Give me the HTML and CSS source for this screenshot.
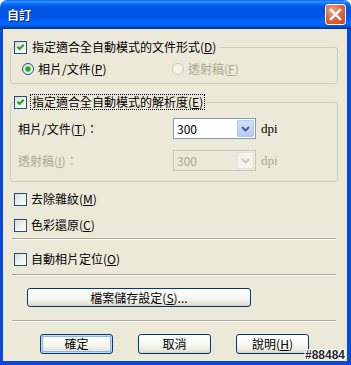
FILE: index.html
```html
<!DOCTYPE html>
<html lang="zh-Hant">
<head>
<meta charset="utf-8">
<title>自訂</title>
<link rel="stylesheet" href="styles.css">
</head>
<body>
<div class="window">
  <div class="titlebar">
    <span class="title">自訂</span>
    <span class="close"><svg width="21" height="21" viewBox="0 0 21 21"><path d="M6 6 L15 15 M15 6 L6 15" stroke="#fff" stroke-width="2.4" stroke-linecap="square"/></svg></span>
  </div>
  <div class="client">
    <fieldset class="group g1">
      <legend><span class="cb"><svg width="11" height="11" viewBox="0 0 11 11"><path d="M2.5 4.8 L4.6 7 L8.6 2.8" fill="none" stroke="#21A121" stroke-width="2.1"/></svg></span><span class="ltext">指定適合全自動模式的文件形式(<u>D</u>)</span></legend>
      <div class="radio-row">
        <span class="radio"><span class="rb on"></span>相片/文件(<u>P</u>)</span>
        <span class="radio dis"><span class="rb off"></span>透射稿(<u>F</u>)</span>
      </div>
    </fieldset>
    <fieldset class="group g2">
      <legend><span class="cb"><svg width="11" height="11" viewBox="0 0 11 11"><path d="M2.5 4.8 L4.6 7 L8.6 2.8" fill="none" stroke="#21A121" stroke-width="2.1"/></svg></span><span class="ltext focus">指定適合全自動模式的解析度(<u>E</u>)</span></legend>
      <div class="res-row">
        <span class="lbl">相片/文件(<u>T</u>)：</span>
        <span class="combo"><span class="val">300</span><span class="drop"><svg width="15" height="17" viewBox="0 0 15 17"><path d="M4 7 L7.5 10.5 L11 7" fill="none" stroke="#4D6185" stroke-width="2"/></svg></span></span>
        <span class="unit">dpi</span>
      </div>
      <div class="res-row dis">
        <span class="lbl">透射稿(<u>I</u>)：</span>
        <span class="combo"><span class="val">300</span><span class="drop"><svg width="15" height="17" viewBox="0 0 15 17"><path d="M4 7 L7.5 10.5 L11 7" fill="none" stroke="#C9C7BA" stroke-width="2"/></svg></span></span>
        <span class="unit">dpi</span>
      </div>
    </fieldset>
    <div class="check-row r1"><span class="cb"></span>去除雜紋(<u>M</u>)</div>
    <div class="check-row r2"><span class="cb"></span>色彩還原(<u>C</u>)</div>
    <hr class="sep s1">
    <div class="check-row r3"><span class="cb"></span>自動相片定位(<u>O</u>)</div>
    <hr class="sep s2">
    <div class="save-row"><span class="btn wide">檔案儲存設定(<u>S</u>)...</span></div>
    <hr class="sep s3">
    <div class="btn-row">
      <span class="btn default">確定</span>
      <span class="btn">取消</span>
      <span class="btn">說明(<u>H</u>)</span>
    </div>
  </div>
  <span class="figid">#88484</span>
</div>
</body>
</html>
```

FILE: styles.css
```css
* { box-sizing: border-box; }
html, body { margin: 0; padding: 0; background: #ffffff; }
body {
  font-family: "Noto Sans CJK TC", "Noto Sans", sans-serif;
  font-size: 12px;
  line-height: 14px;
  color: #000;
}
u { text-decoration: underline; text-underline-offset: 1px; }

.window {
  position: relative;
  width: 351px;
  height: 365px;
  display: flex;
  flex-direction: column;
}

.titlebar {
  flex: none;
  height: 29px;
  border-radius: 7px 7px 0 0;
  background: linear-gradient(to bottom, #0058EE 0%, #3A93FF 4%, #288EFF 7%, #127DFF 10%, #036FFC 14%, #0262EE 18%, #0057E5 24%, #0054E3 30%, #0055EB 56%, #005BF5 66%, #026AFE 76%, #0062EF 86%, #0052D6 92%, #0040AB 96%, #003092 100%);
  display: flex;
  align-items: center;
  justify-content: space-between;
  padding: 0 5px 0 7px;
}
.title {
  color: #fff;
  font-weight: bold;
  font-size: 12px;
  text-shadow: 1px 1px 0 #0A1883;
  margin-top: 1px;
}
.close {
  width: 21px;
  height: 21px;
  border: 1px solid #fff;
  border-radius: 3px;
  background: radial-gradient(circle at 35% 30%, #F0A68C 0%, #E06A45 45%, #C8401C 100%);
  display: flex;
  align-items: center;
  justify-content: center;
}
.close svg { display: block; margin: -1px; }

.client {
  flex: 1;
  background: #ECE9D8;
  border-style: solid;
  border-color: #0A48D8;
  border-width: 0 4px 4px 3px;
  display: flex;
  flex-direction: column;
}

.group {
  margin: 0 9px 0 7px;
  padding: 0;
  border: 1px solid #D0D0BF;
  border-radius: 3px;
  min-inline-size: 0;
}
.group legend {
  margin-left: 3px;
  padding: 0 2px 0 0;
  display: flex;
  align-items: center;
  height: 14px;
}
.g1 { margin-top: 11px; padding-bottom: 7px; }
.g2 { margin-top: 11px; padding-bottom: 10px; }

.cb {
  flex: none;
  width: 13px;
  height: 13px;
  border: 1px solid #1C5180;
  background: linear-gradient(135deg, #DCDCD7 0%, #F4F4F0 60%, #FFFFFF 100%);
  display: inline-flex;
  margin-right: 4px;
}
.cb svg { display: block; }
.ltext { padding: 0 1px; }
.ltext.focus { outline: 1px dotted #000; outline-offset: 0; }

.radio-row {
  display: flex;
  margin-top: 8px;
  padding-left: 11px;
  height: 14px;
  align-items: center;
}
.radio { display: flex; align-items: center; width: 150px; }
.radio.dis { color: #ACA899; }
.rb {
  width: 12px;
  height: 12px;
  border-radius: 50%;
  border: 1px solid #1C5180;
  background: linear-gradient(135deg, #DCDCD7, #FFFFFF);
  margin-right: 4px;
  display: flex;
  align-items: center;
  justify-content: center;
}
.rb.on::after {
  content: "";
  width: 4px;
  height: 4px;
  border-radius: 50%;
  background: #21A121;
  box-shadow: 0 0 0 1px #5BC85B;
}
.rb.off { border-color: #CAC8BB; background: #F4F3EE; }

.res-row {
  display: flex;
  align-items: center;
  padding-left: 7px;
  height: 21px;
}
.res-row + .res-row { margin-top: 11px; }
.g2 legend + .res-row { margin-top: 9px; }
.lbl { width: 155px; }
.combo {
  width: 83px;
  height: 21px;
  border: 1px solid #7F9DB9;
  background: #fff;
  display: flex;
  align-items: center;
  justify-content: space-between;
  padding: 1px;
}
.val { padding-left: 2px; }
.drop {
  width: 17px;
  height: 17px;
  border: 1px solid #B5C7F1;
  border-radius: 2px;
  background: linear-gradient(to bottom, #D2DEFD, #B5C9F7);
  display: flex;
  align-items: center;
  justify-content: center;
}
.unit {
  margin-left: 5px;
  font-family: "Liberation Serif", serif;
  font-size: 13px;
}
.res-row.dis { color: #ACA899; }
.res-row.dis .combo { border-color: #C9C7BA; background: #ECE9D8; }
.res-row.dis .drop { border-color: #E3E2DA; background: #F4F3EE; }

.check-row {
  display: flex;
  align-items: center;
  height: 14px;
  padding-left: 11px;
}
.r1 { margin-top: 10px; }
.r2 { margin-top: 12px; }
.r3 { margin-top: 12px; }

.sep {
  margin: 0 11px 0 9px;
  height: 2px;
  border: 0;
  border-top: 1px solid #ACA899;
  border-bottom: 1px solid #FFFFFF;
}
.s1 { margin-top: 6px; }
.s2 { margin-top: 8px; }
.s3 { margin-top: 13px; }

.btn {
  display: flex;
  align-items: center;
  justify-content: center;
  width: 73px;
  height: 20px;
  border: 1px solid #003C74;
  border-radius: 3px;
  background: linear-gradient(to bottom, #FFFFFF 0%, #F5F4EF 60%, #E6E3D6 90%, #D6D0C5 100%);
}
.btn.wide { width: 224px; height: 19px; }
.btn.default { box-shadow: inset 0 0 0 1px #C8DAF8, inset 0 0 0 2px #8FB0E8; }

.save-row { padding-left: 24px; margin-top: 12px; }
.btn-row {
  display: flex;
  gap: 25px;
  padding-left: 37px;
  margin-top: 12px;
}

.figid {
  position: absolute;
  right: 6px;
  bottom: 3px;
  font-family: "Liberation Sans", sans-serif;
  font-weight: bold;
  font-size: 12px;
  line-height: 13px;
  color: #2A2A2A;
  text-shadow: 1px 0 0 #fff, -1px 0 0 #fff, 0 1px 0 #fff, 0 -1px 0 #fff, 1px 1px 0 #fff, -1px -1px 0 #fff, 1px -1px 0 #fff, -1px 1px 0 #fff;
}
```
